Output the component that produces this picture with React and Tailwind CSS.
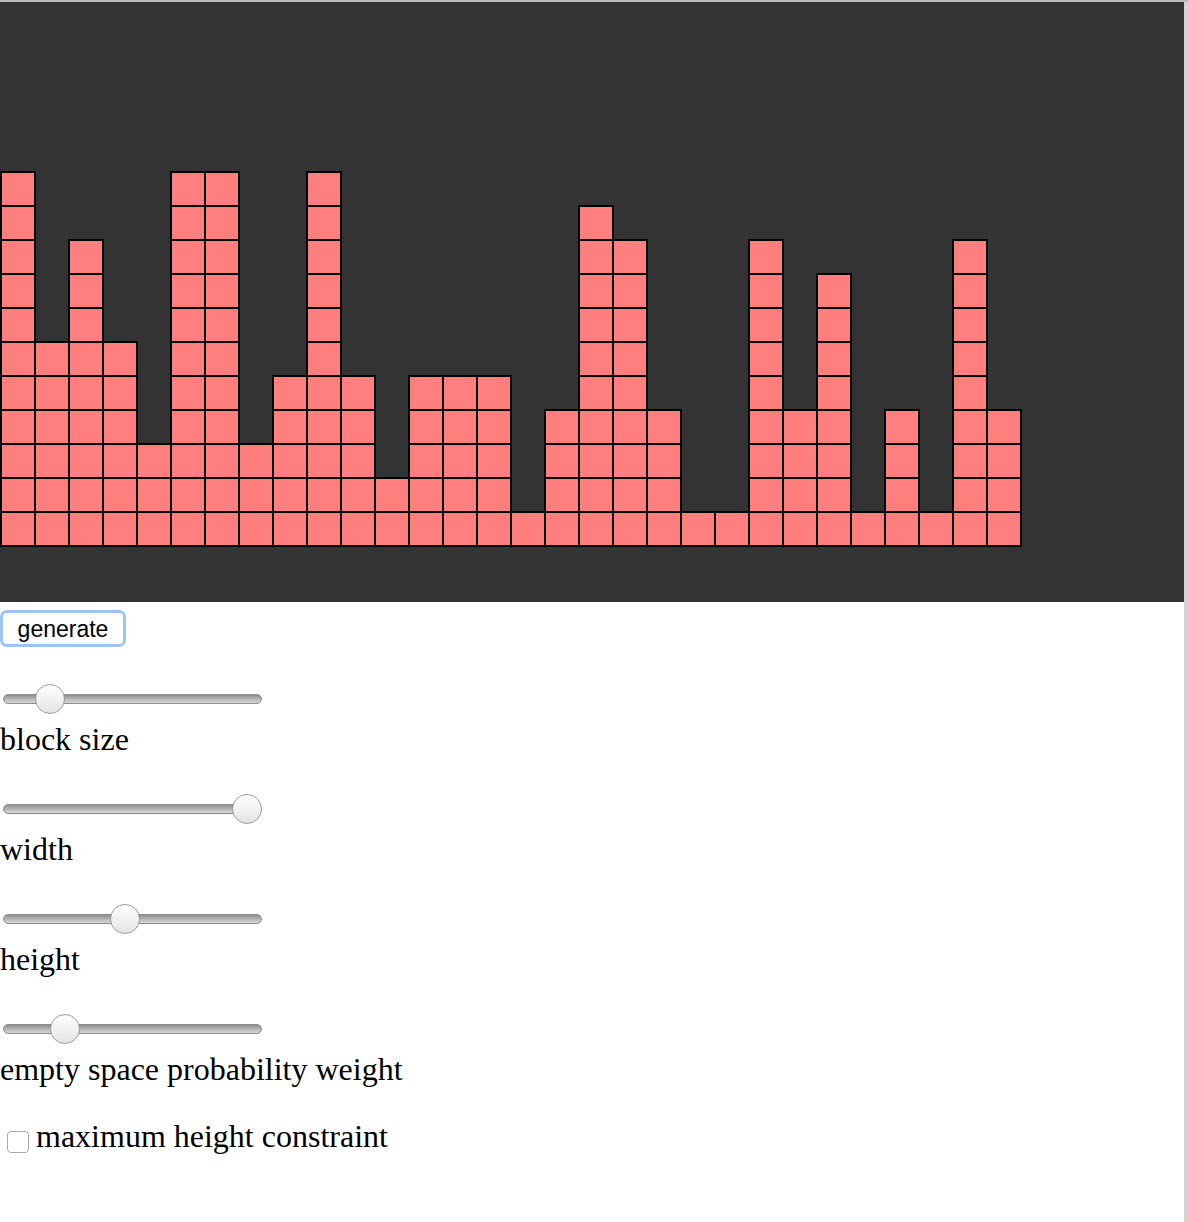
import React from 'react';

const heights = [11, 6, 9, 6, 3, 11, 11, 3, 5, 11, 5, 2, 5, 5, 5, 1, 4, 10, 9, 4, 1, 1, 9, 4, 8, 1, 4, 1, 9, 4];

const sliders = [
  { label: 'block size', thumb: 'left-[32px]' },
  { label: 'width', thumb: 'left-[229px]' },
  { label: 'height', thumb: 'left-[107px]' },
  { label: 'empty space probability weight', thumb: 'left-[47px]' },
];

function Column({ n }) {
  return (
    <div className="flex flex-col w-[36px] -mr-[2px] shrink-0">
      {[...Array(n)].map((_, i) => (
        <div
          key={i}
          className={`w-[36px] h-[36px] border-2 border-black bg-[#ff7f7f] ${i < n - 1 ? '-mb-[2px]' : ''}`}
        />
      ))}
    </div>
  );
}

function Slider({ label, thumb }) {
  return (
    <div className="flex flex-col">
      <div className="relative ml-[3px] w-[259px] h-[30px]">
        <div className="absolute left-0 right-0 top-[10px] h-[10px] rounded-full border border-[#8c8c8c] bg-gradient-to-b from-[#8f8f8f] via-[#b4b4b4] to-[#d8d8d8]" />
        <div className={`absolute top-0 ${thumb} w-[30px] h-[30px] rounded-full border border-[#9c9c9c] bg-gradient-to-b from-white to-[#e4e4e4]`} />
      </div>
      <div className="mt-[7px] text-[32px] leading-[37px] text-black">{label}</div>
    </div>
  );
}

export default function App() {
  return (
    <div className="w-[1188px] h-[1222px] bg-white overflow-hidden flex flex-col" style={{ fontFamily: '"Liberation Serif", serif' }}>
      <div className="h-[2px] bg-[#b8b8b8] shrink-0" />
      <div className="flex flex-1">
        <div className="flex-1 flex flex-col">
          {/* block stacks */}
          <div className="h-[600px] bg-[#333333] flex items-end pb-[55px]">
            {heights.map((n, i) => (
              <Column key={i} n={n} />
            ))}
          </div>

          <div className="mt-[8px]">
            <button
              className="w-[126px] h-[37px] rounded-[7px] border-[3px] border-[#9ec4f4] bg-white flex items-center justify-center text-[23px] text-black"
              style={{ fontFamily: '"Liberation Sans", Arial, sans-serif' }}
            >
              <span className="leading-none mt-[2px]">generate</span>
            </button>
          </div>

          <div className="flex flex-col gap-[36px] mt-[37px]">
            {sliders.map((s) => (
              <Slider key={s.label} {...s} />
            ))}
          </div>

          <div className="flex items-start mt-[30px]">
            <div className="ml-[7px] mt-[13px] w-[22px] h-[22px] rounded-[4px] border border-[#a9a9a9] bg-white shrink-0" />
            <span className="ml-[7px] text-[32px] leading-[37px] text-black">maximum height constraint</span>
          </div>
        </div>
        <div className="w-[4px] bg-[#d4d4d4] shrink-0" />
      </div>
    </div>
  );
}
